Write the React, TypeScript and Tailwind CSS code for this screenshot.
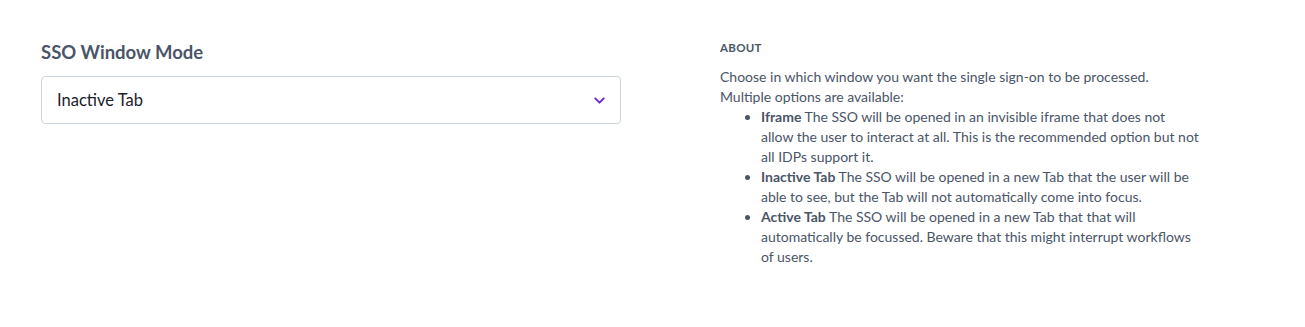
import { ChevronDown } from 'lucide-react';

export default function App() {
  return (
    <div
      className="min-h-[327px] w-[1305px] bg-white flex text-[#4a5568]"
      style={{ fontFamily: 'Lato, "Open Sans", sans-serif' }}
    >
      <div className="w-[580px] ml-[41px] pt-[40px]">
        <label className="block text-[18.5px] font-bold leading-6 text-[#4a5568]">SSO Window Mode</label>
        <div className="mt-[12px] h-[48px] border border-[#cbd5e0] rounded-[4px] flex items-center justify-between pl-[15px] pr-[12px]">
          <span className="text-[16.5px] text-[#1a202c]">Inactive Tab</span>
          <ChevronDown className="w-[17px] h-[17px] text-[#6d28d9]" strokeWidth={2.75} />
        </div>
      </div>
      <div className="ml-[99px] w-[520px] pt-[40px] text-[14px] leading-5">
        <h3 className="text-[11.5px] font-bold tracking-wide uppercase leading-4 text-[#4a5568]">About</h3>
        <div className="mt-[11px]">
          <p>Choose in which window you want the single sign-on to be processed.</p>
          <p>Multiple options are available:</p>
          <ul className="list-disc pl-[41px] whitespace-nowrap">
            <li>
              <b>Iframe</b> The SSO will be opened in an invisible iframe that does not
              <br />
              allow the user to interact at all. This is the recommended option but not
              <br />
              all IDPs support it.
            </li>
            <li>
              <b>Inactive Tab</b> The SSO will be opened in a new Tab that the user will be
              <br />
              able to see, but the Tab will not automatically come into focus.
            </li>
            <li>
              <b>Active Tab</b> The SSO will be opened in a new Tab that that will
              <br />
              automatically be focussed. Beware that this might interrupt workflows
              <br />
              of users.
            </li>
          </ul>
        </div>
      </div>
    </div>
  );
}
